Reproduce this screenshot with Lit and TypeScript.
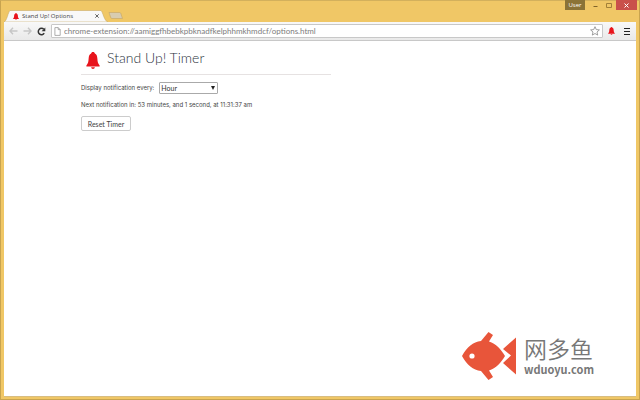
import { LitElement, html, css, svg } from "lit";
import { customElement } from "lit/decorators.js";

const bellShape = svg`<path fill="#e8141c" d="M9 0C7.500 0 6.800.6 6.600 1.700 4.400 2.500 3.600 4.300 3.400 7c-.3 4-.9 5.500-2.900 7.200v1.200h17v-1.200c-2-1.700-2.600-3.200-2.900-7.200-.2-2.700-1-4.500-3.200-5.300C11.200.6 10.500 0 9 0zM6.600 16.200c.2 1.200 1.100 1.800 2.400 1.800s2.200-.6 2.400-1.800z"/>`;
const bell = (cls: string) =>
  html`<svg class=${cls} viewBox="0 0 18 18" preserveAspectRatio="none" aria-hidden="true">${bellShape}</svg>`;

@customElement("browser-frame")
class BrowserFrame extends LitElement {
  static styles = css`
    :host {
      display: flex;
      flex-direction: column;
      box-sizing: border-box;
      min-height: 100vh;
      padding: 0 3px 2px;
      background: #f0c766;
      border: 1px solid #c9a44f;
      border-top-color: #d3b05c;
      font-family: "Open Sans", "Noto Sans", sans-serif;
    }
    svg { display: block; flex: none; }
    button {
      padding: 0;
      border: 0;
      background: none;
      font: inherit;
      display: flex;
      align-items: center;
      justify-content: center;
    }
    .titlebar {
      display: flex;
      align-items: flex-end;
      height: 21px;
    }
    .tab {
      position: relative;
      display: flex;
      align-items: center;
      box-sizing: border-box;
      width: 104px;
      height: 12px;
      padding: 0 8px 0 9px;
    }
    .tab-shape {
      position: absolute;
      inset: 0;
      width: 100%;
      height: 100%;
    }
    .tab-bell { position: relative; width: 6px; height: 7px; }
    .tab-title {
      position: relative;
      flex: 1;
      margin-left: 3px;
      font-size: 6px;
      line-height: 10px;
      color: #444;
      white-space: nowrap;
    }
    .tab-close { position: relative; width: 6px; height: 8px; }
    .new-tab { width: 15px; height: 12px; }
    .window-buttons {
      display: flex;
      align-self: flex-start;
      margin: -1px -1px 0 auto;
    }
    .user {
      width: 20px;
      height: 10px;
      margin-right: 3px;
      background: #8b7337;
      color: #fff;
      font-size: 6px;
      line-height: 9px;
    }
    .win { width: 14px; height: 10px; }
    .close { width: 21px; background: #c9504b; }
    .toolbar {
      display: flex;
      align-items: center;
      box-sizing: border-box;
      height: 19px;
      padding: 0 0 0 2px;
      background: linear-gradient(#f8f8f8, #e9e9e9);
      border-bottom: 1px solid #c8c8c8;
    }
    .nav { width: 14px; height: 14px; }
    .address {
      display: flex;
      align-items: center;
      flex: 1;
      box-sizing: border-box;
      height: 14px;
      margin: 0 1px 0 3px;
      padding: 0 2px;
      background: #fff;
      border: 1px solid #c8c8c8;
      border-radius: 1px;
    }
    .url {
      flex: 1;
      min-width: 0;
      margin: 0 0 0 3px;
      padding: 0;
      border: 0;
      outline: 0;
      background: none;
      height: 12px;
      font: 8px/12px Lato, "Open Sans", sans-serif;
      color: #7c7c7c;
    }
    .tool-bell { width: 7px; height: 8px; }
    .tool { width: 18px; height: 14px; }
    .page { flex: 1; background: #fff; display: flex; flex-direction: column; border-bottom: 1px solid #d8bd80; }
  `;

  render() {
    return html`
      <div class="titlebar">
        <div class="tab">
          <svg class="tab-shape" viewBox="0 0 104 12" preserveAspectRatio="none" aria-hidden="true">
            <path d="M0 12C3 11 4 2 6 .5H97C99 2 100 11 104 12Z" fill="#f8f8f8" stroke="#c9ab66" stroke-width=".6"/>
          </svg>
          ${bell("tab-bell")}
          <span class="tab-title">Stand Up! Options</span>
          <button class="tab-close" aria-label="Close tab">
            <svg width="4" height="4" viewBox="0 0 4 4"><path d="M.3.3l3.400 3.400M3.700.3L.3 3.700" stroke="#555" stroke-width=".9"/></svg>
          </button>
        </div>
        <button class="new-tab" aria-label="New tab">
          <svg width="15" height="8" viewBox="0 0 15 8"><path d="M1 .5h10.500q1 0 1.300 1l1.700 5H4q-1 0-1.300-1z" fill="#d8ccb0" stroke="#c2a566" stroke-width=".6"/></svg>
        </button>
        <div class="window-buttons">
          <button class="user">User</button>
          <button class="win" aria-label="Minimize">
            <svg width="5" height="5" viewBox="0 0 5 5"><path d="M.5 3.500h4" stroke="#806329"/></svg>
          </button>
          <button class="win" aria-label="Maximize">
            <svg width="6" height="5" viewBox="0 0 6 5"><path d="M.5.5h5v4h-5z" fill="none" stroke="#a28038"/></svg>
          </button>
          <button class="win close" aria-label="Close">
            <svg width="5" height="5" viewBox="0 0 5 5"><path d="M.5.5l4 4M4.500.5l-4 4" stroke="#fff"/></svg>
          </button>
        </div>
      </div>
      <div class="toolbar">
        <button class="nav" aria-label="Back">
          <svg width="9" height="8" viewBox="0 0 9 8"><path d="M4 .8L1 4l3 3.200M1 4h7.500" fill="none" stroke="#c6c6c6" stroke-width="1.400"/></svg>
        </button>
        <button class="nav" aria-label="Forward">
          <svg width="9" height="8" viewBox="0 0 9 8"><path d="M5 .8L8 4 5 7.200M8 4H.5" fill="none" stroke="#c6c6c6" stroke-width="1.400"/></svg>
        </button>
        <button class="nav" aria-label="Reload">
          <svg width="9" height="9" viewBox="0 0 9 9"><path d="M7.200 6.200A3.200 3.200 0 1 1 6.800 2.300" fill="none" stroke="#333" stroke-width="1.500"/><path d="M8.300.5v3.700H4.600z" fill="#333"/></svg>
        </button>
        <div class="address">
          <svg width="7" height="9" viewBox="0 0 7 9"><path d="M.9.6h3.300l2 2v5.800H.9zM4.200.6v2h2" fill="none" stroke="#999" stroke-width=".8"/></svg>
          <input class="url" aria-label="Address" value="chrome-extension://aamiggfhbebkpbknadfkelphhmkhmdcf/options.html" />
          <button aria-label="Bookmark">
            <svg width="10" height="10" viewBox="0 0 10 10"><path d="M5 .7l1.300 2.900 3.100.3L7 6l.7 3.100L5 7.500 2.300 9.100 3 6 .6 3.900l3.100-.3z" fill="#fff" stroke="#888" stroke-width=".8"/></svg>
          </button>
        </div>
        <button class="nav" aria-label="Stand Up!">${bell("tool-bell")}</button>
        <button class="tool" aria-label="Menu">
          <svg width="6" height="8" viewBox="0 0 6 8"><path d="M0 1.500h6M0 4.500h6M0 7.500h6" stroke="#222" stroke-width="1.200"/></svg>
        </button>
      </div>
      <div class="page"><slot></slot></div>
    `;
  }
}

@customElement("app-root")
class AppRoot extends LitElement {
  static styles = css`
    :host { display: block; }
    .options { font: 7px/10px Lato, "Open Sans", sans-serif; }
    .brand { font-family: "Noto Sans CJK SC", sans-serif; }
    .options {
      box-sizing: border-box;
      width: 40%;
      max-width: 250px;
      margin-left: 77px;
      padding-top: 5px;
      color: #444;
    }
    .head {
      display: flex;
      align-items: center;
      gap: 7px;
      height: 28px;
      padding-left: 5px;
      border-bottom: 1px solid #e6e2e2;
    }
    .head-bell { width: 14px; height: 17px; }
    h1 {
      margin: 0;
      font-size: 14px;
      line-height: 20px;
      font-weight: 300;
      color: #2c3440;
      white-space: nowrap;
      padding-bottom: 4px;
    }
    label,
    .next { font: 6px/12px Inter, "Open Sans", sans-serif; }
    .row { display: flex; align-items: center; gap: 5px; height: 12px; margin-top: 7px; white-space: nowrap; }
    .pick {
      box-sizing: border-box;
      width: 59px;
      height: 12px;
      padding: 0 3px 0 1px;
      appearance: none;
      border: 1px solid #aaa;
      border-radius: 1px;
      background: #fff;
      font: inherit;
      color: #333;
    }
    .pick-wrap { position: relative; display: flex; }
    .arrow { position: absolute; right: 3px; top: 4px; pointer-events: none; }
    .next { margin: 5px 0; white-space: nowrap; }
    .reset {
      display: block;
      box-sizing: border-box;
      width: 50px;
      height: 15px;
      padding: 0;
      border: 1px solid #ccc;
      border-radius: 2px;
      background: #fff;
      font: inherit;
      color: #444;
    }
    .brand {
      display: flex;
      align-items: center;
      gap: 8px;
      margin: auto 42px 16px auto;
      color: #777;
    }
    .brand-cn { font-size: 23px; line-height: 26px; font-weight: 350; }
    .brand-url { font-size: 11px; line-height: 16px; font-weight: 700; }
  `;

  render() {
    return html`
      <browser-frame>
        <main class="options">
          <div class="head">${bell("head-bell")}<h1>Stand Up! Timer</h1></div>
          <div class="row">
            <label for="every">Display notification every:</label>
            <span class="pick-wrap">
              <select id="every" class="pick"><option>Hour</option></select>
              <svg class="arrow" width="4" height="4" viewBox="0 0 4 4" aria-hidden="true"><path d="M0 0h4L2 4z" fill="#222"/></svg>
            </span>
          </div>
          <p class="next">Next notification in: 53 minutes, and 1 second, at 11:31:37 am</p>
          <button class="reset">Reset Timer</button>
        </main>
        <div class="brand">
          <svg width="54" height="48" viewBox="0 0 54 48" aria-hidden="true">
            <path fill="#e8553a" d="M0 24C5 15 11 10 19 9L26.500 0l4.500 3-4 6.500C34 12 39 17 43 24 39 31 34 36 27 38.500l4 6.500-4.500 3L19 39C11 38 5 33 0 24zM41 17L54 5.500v37L41 31l8-7.500z"/>
            <circle cx="10" cy="24" r="2.600" fill="#fff"/>
          </svg>
          <div>
            <div class="brand-cn" lang="zh">网多鱼</div>
            <div class="brand-url">wduoyu.com</div>
          </div>
        </div>
      </browser-frame>
    `;
  }
}
